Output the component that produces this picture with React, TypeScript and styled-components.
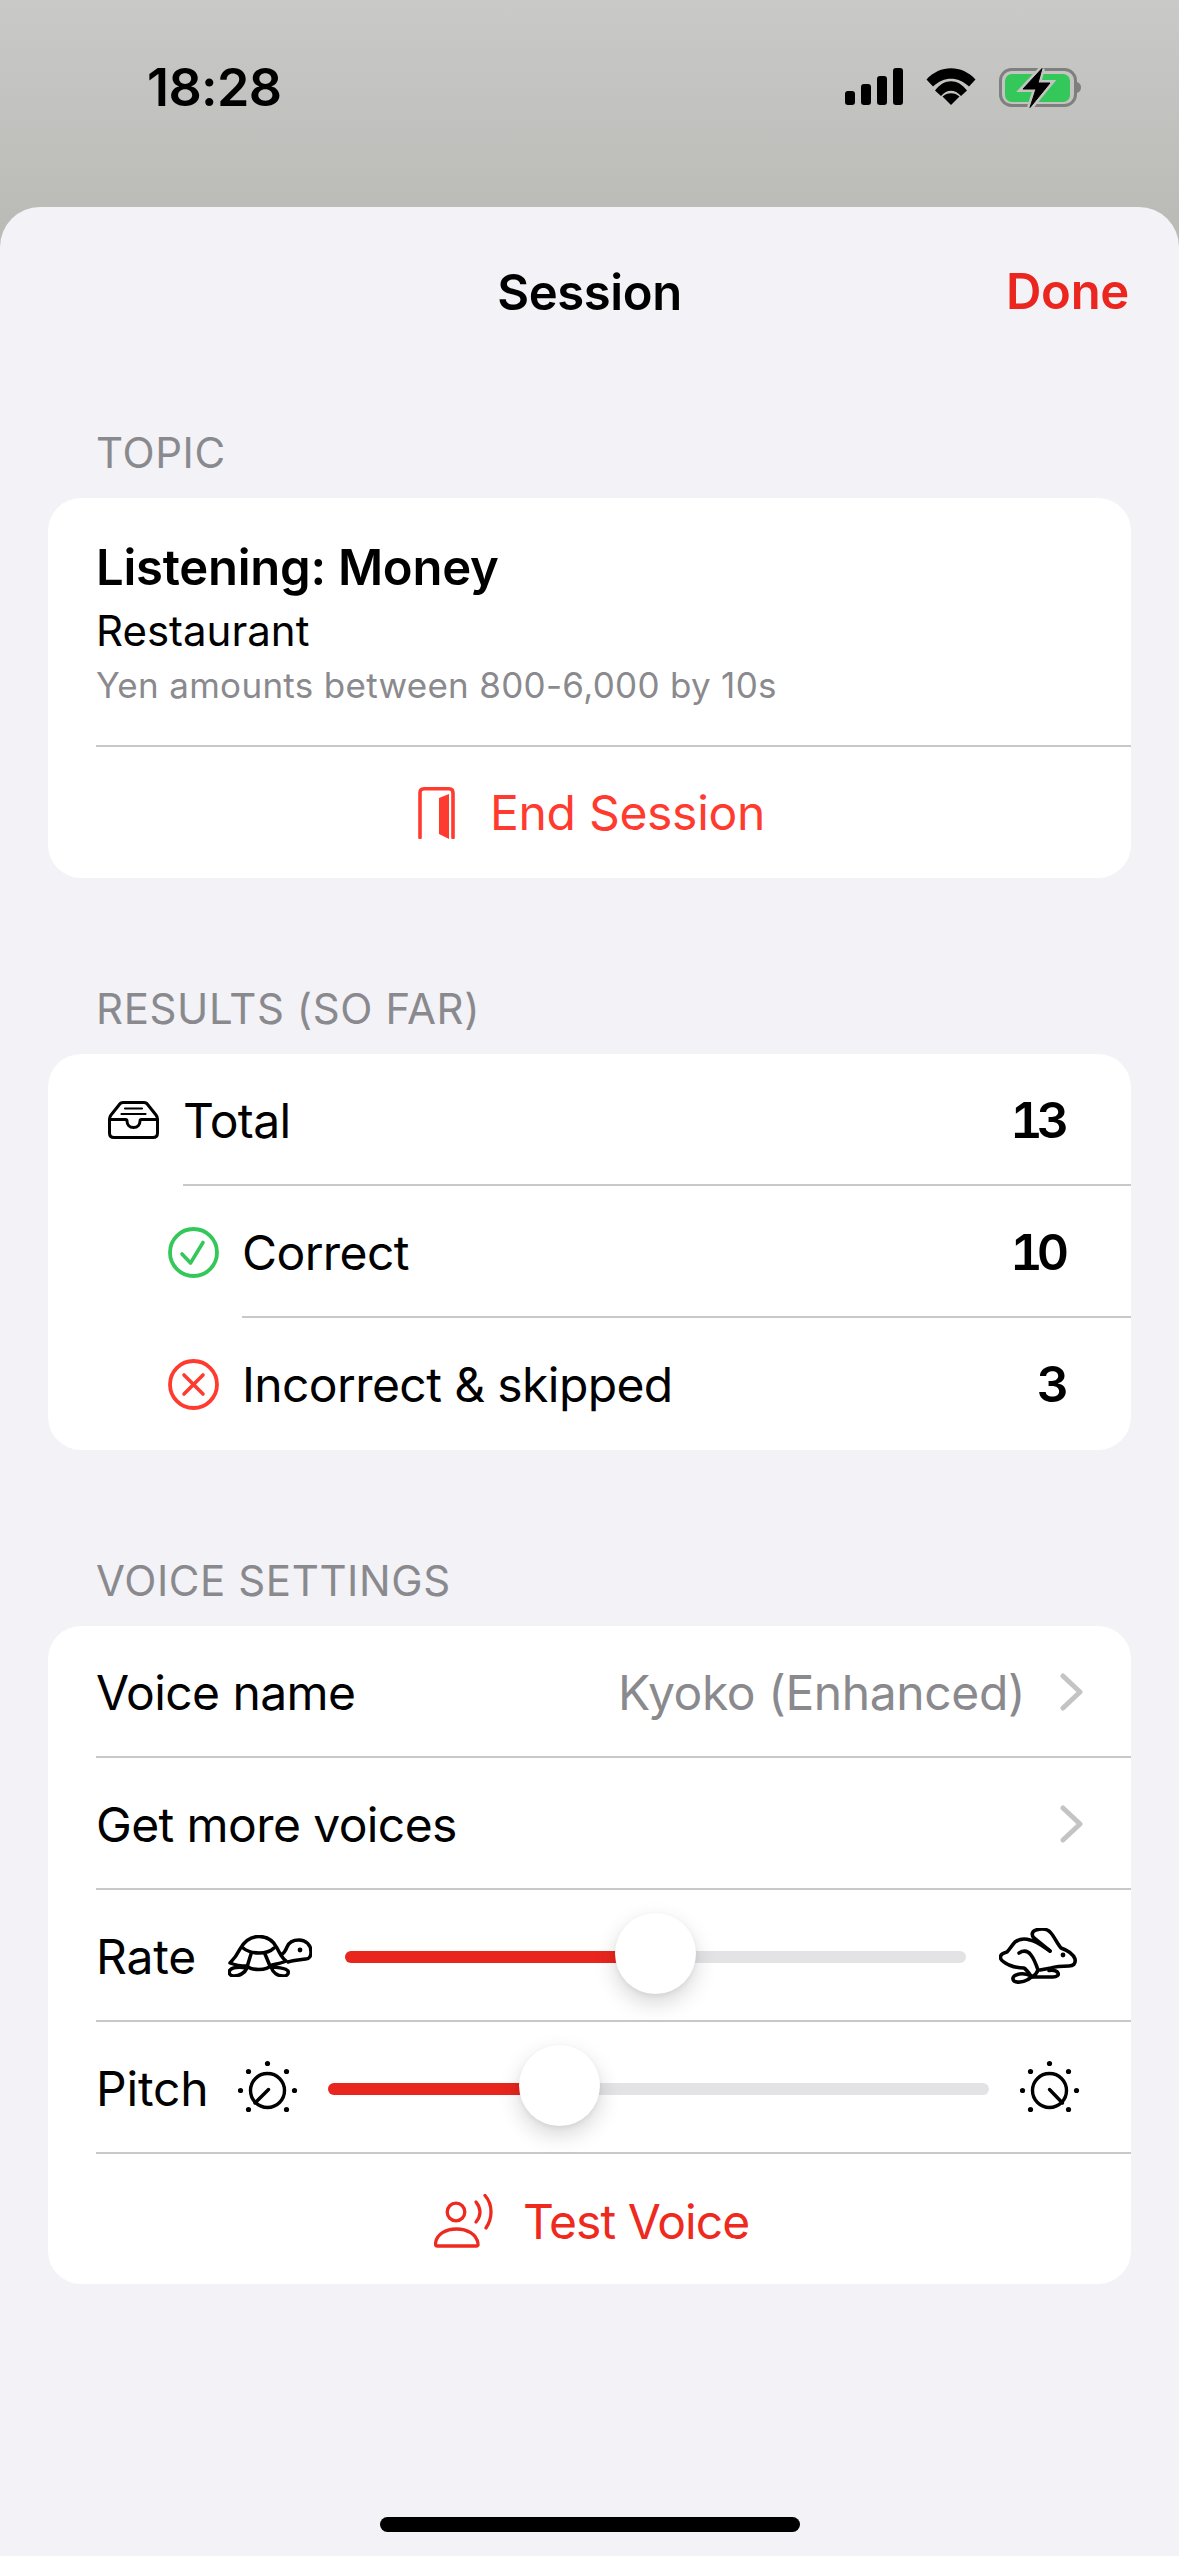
import styled, { createGlobalStyle } from "styled-components";

const GlobalStyle = createGlobalStyle`
  html, body {
    margin: 0;
    padding: 0;
    background: #f2f2f7;
  }
  * {
    box-sizing: border-box;
  }
`;

const Screen = styled.div`
  width: 1179px;
  height: 2556px;
  display: flex;
  flex-direction: column;
  overflow: hidden;
  font-family: Inter, "Liberation Sans", sans-serif;
  color: #000;
  background: linear-gradient(#c9c9c7, #b8b9b5 260px);
`;

const StatusBar = styled.div`
  height: 207px;
  flex-shrink: 0;
  display: flex;
  justify-content: space-between;
  padding: 58px 98px 0 147px;
`;

const Clock = styled.div`
  font-size: 52px;
  line-height: 60px;
  font-weight: 600;
  letter-spacing: -0.6px;
`;

const StatusIcons = styled.div`
  display: flex;
  align-items: flex-start;
  padding-top: 10px;
  gap: 23px;
`;

const Sheet = styled.div`
  flex: 1;
  position: relative;
  display: flex;
  flex-direction: column;
  background: #f2f2f7;
  border-radius: 40px 40px 0 0;
`;

const NavBar = styled.div`
  height: 170px;
  flex-shrink: 0;
  display: flex;
  align-items: center;
  justify-content: center;
  position: relative;
`;

const NavTitle = styled.div`
  font-size: 49px;
  font-weight: 600;
  letter-spacing: -0.4px;
`;

const DoneButton = styled.div`
  position: absolute;
  right: 50px;
  top: 53px;
  font-size: 49px;
  line-height: 64px;
  font-weight: 600;
  letter-spacing: -0.3px;
  color: #ea261e;
`;

const Section = styled.section`
  margin-bottom: 55px;
`;

const SectionLabel = styled.div`
  height: 121px;
  display: flex;
  align-items: flex-end;
  padding: 0 0 20px 96px;
  font-size: 42px;
  line-height: 50px;
  color: #8a8a8e;
  letter-spacing: 0.6px;
`;

const Card = styled.div`
  margin: 0 48px;
  background: #fff;
  border-radius: 33px;
  overflow: hidden;
`;

const TopicInfo = styled.div`
  height: 247px;
  padding: 40px 0 0 48px;
`;

const TopicTitle = styled.div`
  font-size: 49px;
  line-height: 60px;
  font-weight: 600;
  letter-spacing: -0.25px;
`;

const TopicSubtitle = styled.div`
  margin-top: 8px;
  font-size: 42px;
  line-height: 50px;
`;

const TopicDetail = styled.div`
  margin-top: 8px;
  font-size: 35px;
  line-height: 42px;
  color: #8a8a8e;
  letter-spacing: 0.3px;
`;

const Row = styled.div<{ $indent: number }>`
  height: 132px;
  display: flex;
  align-items: center;
  padding-left: ${(props) => props.$indent}px;
`;

const RowIcon = styled.div<{ $width: number }>`
  width: ${(props) => props.$width}px;
  flex-shrink: 0;
  display: flex;
`;

const RowBody = styled.div<{ $divider?: boolean }>`
  flex: 1;
  height: 100%;
  display: flex;
  align-items: center;
  justify-content: space-between;
  padding-right: 62px;
  font-size: 48px;
  letter-spacing: -0.6px;
  box-shadow: ${(props) => (props.$divider ? "inset 0 -2px 0 #c8c8ca" : "none")};
`;

const Count = styled.span`
  margin-right: 6px;
  font-weight: 600;
  font-size: 50px;
  letter-spacing: -6px;
  font-variant-numeric: tabular-nums;
`;

const ValueRow = styled(RowBody)`
  padding-right: 48px;
`;

const Value = styled.span`
  display: flex;
  align-items: center;
  gap: 35px;
  color: #8a8a8e;
  letter-spacing: -0.4px;
`;

const ActionRow = styled.div<{ $color: string; $gap: number; $tracking: number; $height: number; $divider?: boolean }>`
  height: ${(props) => props.$height}px;
  margin-left: 48px;
  padding: ${(props) => (props.$divider ? "0" : "4px")} 44px 0 0;
  border-top: ${(props) => (props.$divider ? "2px solid #c8c8ca" : "none")};
  display: flex;
  align-items: center;
  justify-content: center;
  gap: ${(props) => props.$gap}px;
  font-size: 48px;
  letter-spacing: ${(props) => props.$tracking}px;
  color: ${(props) => props.$color};
`;

const SliderRow = styled.div<{ $label: number; $icon: number; $endIcon: number; $gap: number }>`
  height: 132px;
  margin-left: 48px;
  padding-right: 48px;
  box-shadow: inset 0 -2px 0 #c8c8ca;
  display: grid;
  align-items: center;
  grid-template-columns: ${(props) => `${props.$label}px ${props.$icon}px 1fr ${props.$endIcon}px`};
  column-gap: ${(props) => props.$gap}px;
  font-size: 48px;
  letter-spacing: -0.2px;
`;

const Track = styled.div`
  position: relative;
  height: 12px;
  margin-top: 2px;
  border-radius: 6px;
  background: #e3e3e6;
`;

const TrackFill = styled.div`
  height: 100%;
  border-radius: 6px 0 0 6px;
  background: #e8261e;
`;

const Thumb = styled.div`
  position: absolute;
  top: -38px;
  width: 81px;
  height: 81px;
  margin-left: -40.5px;
  border-radius: 50%;
  background: #fff;
  box-shadow: 0 9px 22px rgba(0, 0, 0, 0.16), 0 2px 5px rgba(0, 0, 0, 0.06);
`;

const HomeIndicator = styled.div`
  position: absolute;
  left: 380px;
  bottom: 24px;
  width: 420px;
  height: 15px;
  border-radius: 8px;
  background: #000;
`;

function SignalIcon() {
  return (
    <svg width="58" height="37" viewBox="0 0 58 37">
      <rect x="0" y="23" width="10" height="14" rx="3" />
      <rect x="16" y="16" width="10" height="21" rx="3" />
      <rect x="32" y="8" width="10" height="29" rx="3" />
      <rect x="48" y="0" width="10" height="37" rx="3" />
    </svg>
  );
}

function WifiIcon() {
  return (
    <svg width="50" height="37" viewBox="0 0 50 37">
      <path d="M0.500 11.500C14 -3.500 36 -3.500 49.500 11.500L43 18.500C32 8 18 8 7 18.500Z" />
      <path d="M9 22.500C18 10 32 10 41 22.500L35 28C29 21 21 21 15 28Z" />
      <path d="M25 37L16.500 28.500C21 24 29 24 33.500 28.500Z" />
    </svg>
  );
}

function BatteryIcon() {
  const bolt = "M43 0.500L24 21H37L31 39.500L51 15H39Z";
  return (
    <svg width="82" height="40" viewBox="0 0 82 40">
      <rect x="1.500" y="1.500" width="75" height="36" rx="11" fill="none" stroke="#7f7f7f" strokeWidth="3" />
      <rect x="6" y="6" width="65" height="28" rx="7" fill="#34c759" />
      <path d="M78 14C81 15 82 17 82 19.500C82 22 81 24 78 25Z" fill="#7f7f7f" />
      <path d={bolt} fill="#c3c4c1" stroke="#c3c4c1" strokeWidth="6" />
      <path d={bolt} fill="#000" stroke="#000" strokeWidth="1" strokeLinejoin="round" />
    </svg>
  );
}

function DoorIcon() {
  return (
    <svg width="37" height="52" viewBox="0 0 37 52">
      <path d="M2 50.500V6Q2 1.800 6 1.800H31Q35 1.800 35 6V50.500" fill="none" stroke="#ff3b30" strokeWidth="3.600" strokeLinecap="round" />
      <path d="M21 11L31 7V52L21 47Z" fill="#ff3b30" />
    </svg>
  );
}

function TrayIcon() {
  return (
    <svg width="51" height="38" viewBox="0 0 51 38" fill="none" stroke="#000" strokeWidth="3" strokeLinecap="round" strokeLinejoin="round">
      <path d="M15 1.500H36Q38.500 1.500 40 4L48 14Q49.500 16 49.500 18V32Q49.500 36.500 45 36.500H6Q1.500 36.500 1.500 32V18Q1.500 16 3 14L11 4Q12.500 1.500 15 1.500Z" />
      <path d="M2 18.500H17.500C18.500 18.500 19 19 19 20C19 24 21.500 26.500 25.500 26.500C29.500 26.500 32 24 32 20C32 19 32.500 18.500 33.500 18.500H49" />
      <path d="M17 7.500H34M13.500 13H37.500" strokeWidth="2.200" />
    </svg>
  );
}

function CheckIcon() {
  return (
    <svg width="51" height="51" viewBox="0 0 51 51" fill="none" stroke="#34c759" strokeLinecap="round" strokeLinejoin="round">
      <circle cx="25.500" cy="25.500" r="23.500" strokeWidth="3.800" />
      <path d="M14 27L22.500 36L35 15.500" strokeWidth="3.600" />
    </svg>
  );
}

function CrossIcon() {
  return (
    <svg width="51" height="51" viewBox="0 0 51 51" fill="none" stroke="#ff3b30" strokeLinecap="round">
      <circle cx="25.500" cy="25.500" r="23.500" strokeWidth="3.800" />
      <path d="M16 16L35 35M35 16L16 35" strokeWidth="3.600" />
    </svg>
  );
}

function TurtleIcon() {
  return (
    <svg width="84" height="42" viewBox="0 0 84 42" fill="none" stroke="#000" strokeWidth="3.500" strokeLinecap="round" strokeLinejoin="round">
      <path d="M2 28C6 24 9 20 12 14C17 5 24 1.500 31 1.500C38 1.500 45 5 49 13C52 19 55 24 58 26C54 28 49 29 44 30C41 33 36 34.500 31 34.500C26 34.500 21 33 19 31C13 31 7 30 2 28Z" />
      <path d="M15 13C20 17 25 18 31 18C37 18 42 17 46 13" />
      <path d="M23 19L19 32M37 19L42 31" />
      <path d="M19 33C13 32 5 32 2 35C0 38 2 41 6 41C11 41 17 38 19 33Z" />
      <path d="M43 32C47 32 58 33 60 36C61 39 59 41 55 41C50 41 45 38 43 32Z" />
      <path d="M53 20C56 18 58 15 59 12C61 7 65 5 71 5C78 5 83 10 83 17C83 21 81 24 78 24C72 25 66 25 60 27" />
      <circle cx="72" cy="15" r="2.400" fill="#000" stroke="none" />
    </svg>
  );
}

function RabbitIcon() {
  return (
    <svg width="84" height="56" viewBox="0 0 84 56" fill="none" stroke="#000" strokeWidth="3.600" strokeLinecap="round" strokeLinejoin="round">
      <path d="M51 23L35 10C32 7 33 3 37 2C43 0 49 1 52 5C56 10 59 17 62 20C68 22 74 26 76 31C77 36 74 38 70 38C64 38 58 38 52 40L41 42" />
      <path d="M51 23C42 17 37 13 31 12C25 10 20 11 16 14C13 17 11 21 8 24C4 25 1 27 1.500 30C2 33 6 35 10 37C15 39 21 40 25 40C28 42 30 45 32 48" />
      <path d="M20 25C25 22 29 23 32 27C35 31 37 36 39 42C38 45 36 47 33 49H54C58 49 60 47 59 45C58 43 54 42 50 42.500" />
      <path d="M32 48C28 46 22 45 17 47C14 48 13 51 15 53C18 55 24 54 28 52C30 51 31 50 33 49" />
      <circle cx="64" cy="27" r="2.400" fill="#000" stroke="none" />
    </svg>
  );
}

function DialIcon({ needle }: { needle: string }) {
  const dots = [
    [0, -27],
    [-19, -19],
    [19, -19],
    [-27, 0],
    [27, 0],
    [-19, 19],
    [19, 19],
  ];
  return (
    <svg width="60" height="64" viewBox="0 0 60 64" fill="none" stroke="#000">
      {dots.map(([x, y]) => (
        <circle key={`${x}-${y}`} cx={29.5 + x} cy={34.5 + y} r="2.600" fill="#000" stroke="none" />
      ))}
      <circle cx="29.500" cy="34.500" r="17" strokeWidth="3.400" />
      <path d={needle} strokeWidth="3.400" strokeLinecap="round" />
    </svg>
  );
}

function VoiceIcon() {
  return (
    <svg width="60" height="54" viewBox="0 0 60 54" fill="none" stroke="#ee2a1f" strokeWidth="3.300" strokeLinecap="round" strokeLinejoin="round">
      <circle cx="22" cy="18" r="8.800" />
      <path d="M3.500 52H42Q44.500 52 44 49.500C42.500 40 33 35 22.500 35C12 35 2.500 40 1.500 49.500Q1.200 52 3.500 52Z" />
      <path d="M42 8C44.500 11 46 14.500 46 18C46 21.500 44.500 25 42 28" />
      <path d="M51 1.500C55 6 57 12 57 18C57 24 55 29.500 52 34" />
    </svg>
  );
}

function Chevron() {
  return (
    <svg width="23" height="38" viewBox="0 0 23 38" fill="none" stroke="#c4c4c6" strokeWidth="5" strokeLinecap="round" strokeLinejoin="round">
      <path d="M3 3L20 19L3 35" />
    </svg>
  );
}

function Slider({ value }: { value: number }) {
  return (
    <Track>
      <TrackFill style={{ width: `${value}%` }} />
      <Thumb style={{ left: `${value}%` }} />
    </Track>
  );
}

const results = [
  { label: "Total", count: 13, indent: 60, iconWidth: 75, icon: <TrayIcon />, divider: true },
  { label: "Correct", count: 10, indent: 120, iconWidth: 74, icon: <CheckIcon />, divider: true },
  { label: "Incorrect & skipped", count: 3, indent: 120, iconWidth: 74, icon: <CrossIcon />, divider: false },
];

export default function App() {
  return (
    <Screen>
      <GlobalStyle />
      <StatusBar>
        <Clock>18:28</Clock>
        <StatusIcons>
          <SignalIcon />
          <WifiIcon />
          <BatteryIcon />
        </StatusIcons>
      </StatusBar>
      <Sheet>
        <NavBar>
          <NavTitle>Session</NavTitle>
          <DoneButton>Done</DoneButton>
        </NavBar>

        <Section>
          <SectionLabel>TOPIC</SectionLabel>
          <Card>
            <TopicInfo>
              <TopicTitle>Listening: Money</TopicTitle>
              <TopicSubtitle>Restaurant</TopicSubtitle>
              <TopicDetail>Yen amounts between 800-6,000 by 10s</TopicDetail>
            </TopicInfo>
            <ActionRow $color="#ff3b30" $gap={35} $tracking={-0.3} $height={133} $divider>
              <DoorIcon />
              End Session
            </ActionRow>
          </Card>
        </Section>

        <Section>
          <SectionLabel>RESULTS (SO FAR)</SectionLabel>
          <Card>
            {results.map((result) => (
              <Row key={result.label} $indent={result.indent}>
                <RowIcon $width={result.iconWidth}>{result.icon}</RowIcon>
                <RowBody $divider={result.divider}>
                  {result.label}
                  <Count>{result.count}</Count>
                </RowBody>
              </Row>
            ))}
          </Card>
        </Section>

        <Section>
          <SectionLabel>VOICE SETTINGS</SectionLabel>
          <Card>
            <Row $indent={48}>
              <ValueRow $divider>
                Voice name
                <Value>
                  Kyoko (Enhanced)
                  <Chevron />
                </Value>
              </ValueRow>
            </Row>
            <Row $indent={48}>
              <ValueRow $divider>
                Get more voices
                <Chevron />
              </ValueRow>
            </Row>
            <SliderRow $label={99} $icon={84} $endIcon={84} $gap={33}>
              Rate
              <TurtleIcon />
              <Slider value={50} />
              <RabbitIcon />
            </SliderRow>
            <SliderRow $label={111} $icon={59} $endIcon={63} $gap={31}>
              Pitch
              <DialIcon needle="M30.500 33.500L17 47" />
              <Slider value={35} />
              <DialIcon needle="M29.500 33.500L42.500 47" />
            </SliderRow>
            <ActionRow $color="#ee2a1f" $gap={29} $tracking={-1} $height={130}>
              <VoiceIcon />
              Test Voice
            </ActionRow>
          </Card>
        </Section>
        <HomeIndicator />
      </Sheet>
    </Screen>
  );
}
